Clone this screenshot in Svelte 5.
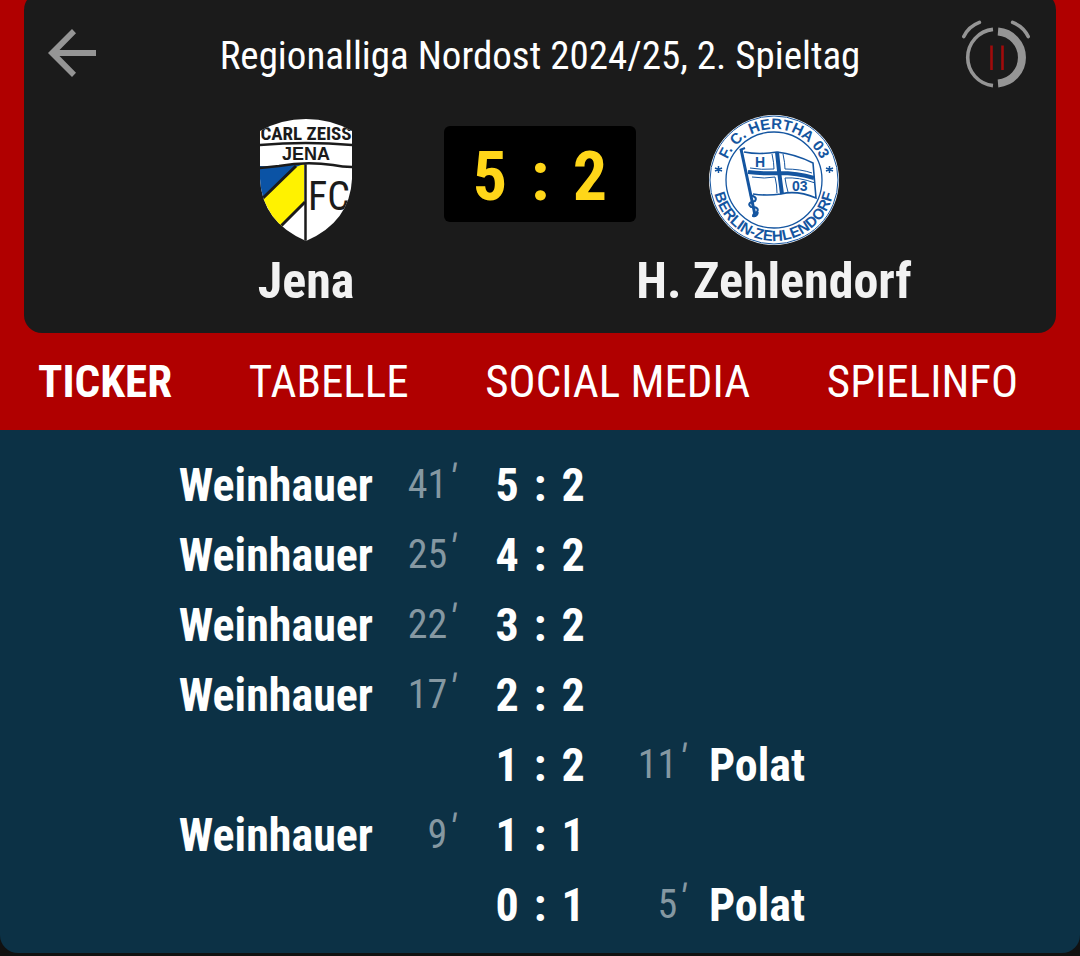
<script lang="ts">
  type Goal = { home: number; away: number; minute: number; player: string; side: "home" | "away" };

  const match = {
    title: "Regionalliga Nordost 2024/25, 2. Spieltag",
    home: "Jena",
    away: "H. Zehlendorf",
    score: [5, 2],
  };

  const tabs = ["Ticker", "Tabelle", "Social Media", "Spielinfo"];
  let active = $state("Ticker");

  // newest goal first
  const goals: Goal[] = [
    { home: 5, away: 2, minute: 41, player: "Weinhauer", side: "home" },
    { home: 4, away: 2, minute: 25, player: "Weinhauer", side: "home" },
    { home: 3, away: 2, minute: 22, player: "Weinhauer", side: "home" },
    { home: 2, away: 2, minute: 17, player: "Weinhauer", side: "home" },
    { home: 1, away: 2, minute: 11, player: "Polat", side: "away" },
    { home: 1, away: 1, minute: 9, player: "Weinhauer", side: "home" },
    { home: 0, away: 1, minute: 5, player: "Polat", side: "away" },
  ];
</script>

{#snippet minute(value: number)}
  <span class="minute">{value}<i class="prime">′</i></span>
{/snippet}

<div class="page">
  <header class="head">
    <div class="card">
      <div class="topbar">
        <button class="back" aria-label="Zurück">
          <svg width="48" height="48" viewBox="0 0 48 48" aria-hidden="true">
            <path d="M48 21H11.5L28 4.2 24 0 0 24 24 48 28 43.8 11.5 27H48Z" fill="#959595" />
          </svg>
        </button>
        <h1 class="title">{match.title}</h1>
        <button class="clock" aria-label="Halbzeit">
          <svg width="72" height="72" viewBox="0 0 72 72" fill="none" aria-hidden="true">
            <path d="M33 9.36A28.3 28.3 0 0 0 33 65.64" stroke="#959595" stroke-width="3.6" />
            <path d="M38 11.58A26 26 0 0 1 38 63.42" stroke="#959595" stroke-width="8" />
            <path
              d="M3.8 16.6Q8.5 6.5 19.4 2.4M52.6 2.4Q63.5 6.5 68.2 16.6"
              stroke="#959595"
              stroke-width="3.6"
              stroke-linecap="round"
            />
            <path d="M31.5 25.5V50M42.5 25.5V50" stroke="#a00b0b" stroke-width="2.6" />
          </svg>
        </button>
      </div>

      <div class="teams">
        <div class="team">
          <svg class="crest" viewBox="-18 -4 130 130" aria-hidden="true">
            <defs>
              <clipPath id="shield">
                <path d="M1 12Q22 0 47 0T93 12V60Q91 103 47 122Q3 103 1 60Z" />
              </clipPath>
            </defs>
            <g clip-path="url(#shield)">
              <rect width="94" height="122" fill="#fff" />
              <path d="M0 47Q20 48 45 44L3 80H0Z" fill="#0b53a5" />
              <path d="M34 49L45 45V84L20 110 4 80Z" fill="#fff200" />
              <path d="M37 47L3 80M46 83L19 110" stroke="#1b1b1b" stroke-width="3" />
              <path
                d="M0 26Q47 22 94 26M0 49Q10 48 20 47Q47 42 74 46Q84 48 94 48M46.5 45V122"
                fill="none"
                stroke="#1b1b1b"
                stroke-width="2.5"
              />
              <text class="crest-top" x="47" y="21" text-anchor="middle">CARL ZEISS</text>
              <text class="crest-mid" x="47" y="41" text-anchor="middle">JENA</text>
              <text class="crest-fc" x="49" y="91">FC</text>
            </g>
          </svg>
          <h2 class="name">{match.home}</h2>
        </div>

        <div class="board">
          <span>{match.score[0]}</span>
          <span>:</span>
          <span>{match.score[1]}</span>
        </div>

        <div class="team">
          <svg class="crest" viewBox="0 0 130 130" fill="none" stroke="#1455a0" aria-hidden="true">
            <defs>
              <path id="arc-top" d="M14 65A51 51 0 0 1 116 65" />
              <path id="arc-bottom" d="M4 65A61 61 0 0 0 126 65" />
            </defs>
            <circle cx="65" cy="65" r="65" fill="#fff" stroke="none" />
            <circle cx="65" cy="65" r="64" stroke-width="1" />
            <circle cx="65" cy="65" r="48" stroke-width="1.3" />
            <text class="ring"><textPath href="#arc-top" startOffset="50%" text-anchor="middle">F. C. HERTHA 03</textPath></text>
            <text class="ring"><textPath href="#arc-bottom" startOffset="50%" text-anchor="middle">BERLIN-ZEHLENDORF</textPath></text>
            <path d="M9.5 51V58M6 53L13 56M13 53L6 56M120.5 51V58M117 53L124 56M124 53L117 56" stroke-width="1.5" />
            <path d="M32 34L46 100" stroke-width="3" />
            <path d="M31 35l5-2M41 80q8 2 5 6q-9 2-4 6q9 0 6 5q-4 2-4 4q4 1 5-4" stroke-width="2" />
            <path d="M35 37Q50 40 68 37Q86 39 104 48L107 83Q88 75 72 79Q58 81 44 79" stroke-width="1.6" />
            <path d="M68 37Q70 58 73 79M39 57Q55 59 70 58Q88 58 105 63" stroke-width="4" />
            <path
              d="M63 39Q65 48 65 54Q52 55 41 53M74 39Q76 48 76 54Q92 54 103 58M43 62Q56 64 66 62Q68 70 68 78M106 68Q90 62 76 63Q77 70 79 77"
              stroke-width="1"
            />
            <text class="flag" x="46" y="52">H</text>
            <text class="flag" x="83" y="76">03</text>
          </svg>
          <h2 class="name">{match.away}</h2>
        </div>
      </div>
    </div>

    <nav class="tabs">
      {#each tabs as tab (tab)}
        <button class="tab" class:active={active === tab} onclick={() => (active = tab)}>{tab}</button>
      {/each}
    </nav>
  </header>

  <main class="ticker">
    <ul class="goals">
      {#each goals as g (g.minute)}
        <li class="goal">
          <div class="side home">
            {#if g.side === "home"}
              <span>{g.player}</span>
              {@render minute(g.minute)}
            {/if}
          </div>
          <div class="score">
            <span>{g.home}</span>
            <span>:</span>
            <span>{g.away}</span>
          </div>
          <div class="side away">
            {#if g.side === "away"}
              {@render minute(g.minute)}
              <span>{g.player}</span>
            {/if}
          </div>
        </li>
      {/each}
    </ul>
  </main>
</div>

<style>
  :global(body) {
    background: #111;
  }

  .page {
    font-family: "Liberation Sans Narrow", "Roboto Condensed", Roboto, sans-serif;
    color: #fff;
    overflow: hidden;
  }
  button {
    appearance: none;
    background: none;
    border: none;
    padding: 0;
    color: inherit;
    font: inherit;
    cursor: pointer;
  }
  svg {
    display: block;
  }

  .head {
    display: flex;
    flex-direction: column;
    background: #b00000;
  }
  .card {
    margin: -8px 24px 0;
    padding: 28px 24px 24px;
    background: #1b1b1b;
    border-radius: 18px;
  }
  .topbar {
    display: flex;
    align-items: center;
  }
  .back {
    align-self: flex-start;
    width: 72px;
    padding: 9px 0;
  }
  .title {
    flex: 1;
    margin: 0;
    font-size: 39px;
    font-weight: 400;
    line-height: 70px;
    text-align: center;
    white-space: nowrap;
  }

  .teams {
    display: grid;
    grid-template-columns: 276px 192px 276px;
    justify-content: center;
    margin-top: 23px;
  }
  .team {
    display: flex;
    flex-direction: column;
    align-items: center;
    gap: 8px;
  }
  .crest {
    width: 130px;
    height: 130px;
  }
  .name {
    margin: 0;
    color: #f2f2f2;
    font-size: 50px;
    font-weight: 700;
    line-height: 56px;
    white-space: nowrap;
  }
  .board {
    display: grid;
    grid-template-columns: 50px 50px 50px;
    justify-content: center;
    height: 96px;
    margin-top: 11px;
    background: #000;
    border-radius: 6px;
    color: #ffd619;
    font-size: 68px;
    font-weight: 700;
    line-height: 102px;
    text-align: center;
  }

  .crest text {
    stroke: none;
  }
  .crest-top {
    font-size: 19px;
    font-weight: 700;
    fill: #1b1b1b;
  }
  .crest-mid {
    font-family: "Liberation Sans", sans-serif;
    font-size: 18px;
    font-weight: 700;
    fill: #1b1b1b;
  }
  .crest-fc {
    font-size: 40px;
    fill: #1b1b1b;
  }
  .ring,
  .flag {
    font-family: "Liberation Sans", sans-serif;
    font-size: 15px;
    font-weight: 700;
    fill: #1455a0;
  }
  .flag {
    font-size: 14px;
  }

  .tabs {
    display: flex;
    justify-content: space-between;
    padding: 0 62px 0 38px;
  }
  .tab {
    font-size: 45px;
    line-height: 97px;
    text-transform: uppercase;
    white-space: nowrap;
  }
  .tab.active {
    font-weight: 700;
  }

  .ticker {
    padding: 20px 0 13px;
    background: #0c3145;
    border-radius: 0 0 18px 18px;
  }
  .goals {
    list-style: none;
    margin: 0;
    padding: 0;
  }
  .goal {
    display: grid;
    grid-template-columns: 1fr 168px 1fr;
    font-size: 46px;
    font-weight: 700;
    line-height: 70px;
  }
  .side {
    display: flex;
  }
  .home {
    justify-content: flex-end;
  }
  .away {
    gap: 23px;
  }
  .minute {
    display: flex;
    justify-content: flex-end;
    gap: 2px;
    width: 62px;
    color: #8598a2;
    font-size: 40px;
    font-weight: 400;
  }
  .home .minute {
    width: 83px;
  }
  .prime {
    line-height: 60px;
  }
  .score {
    display: grid;
    grid-template-columns: 33px 33px 33px;
    justify-content: center;
    text-align: center;
  }
</style>
